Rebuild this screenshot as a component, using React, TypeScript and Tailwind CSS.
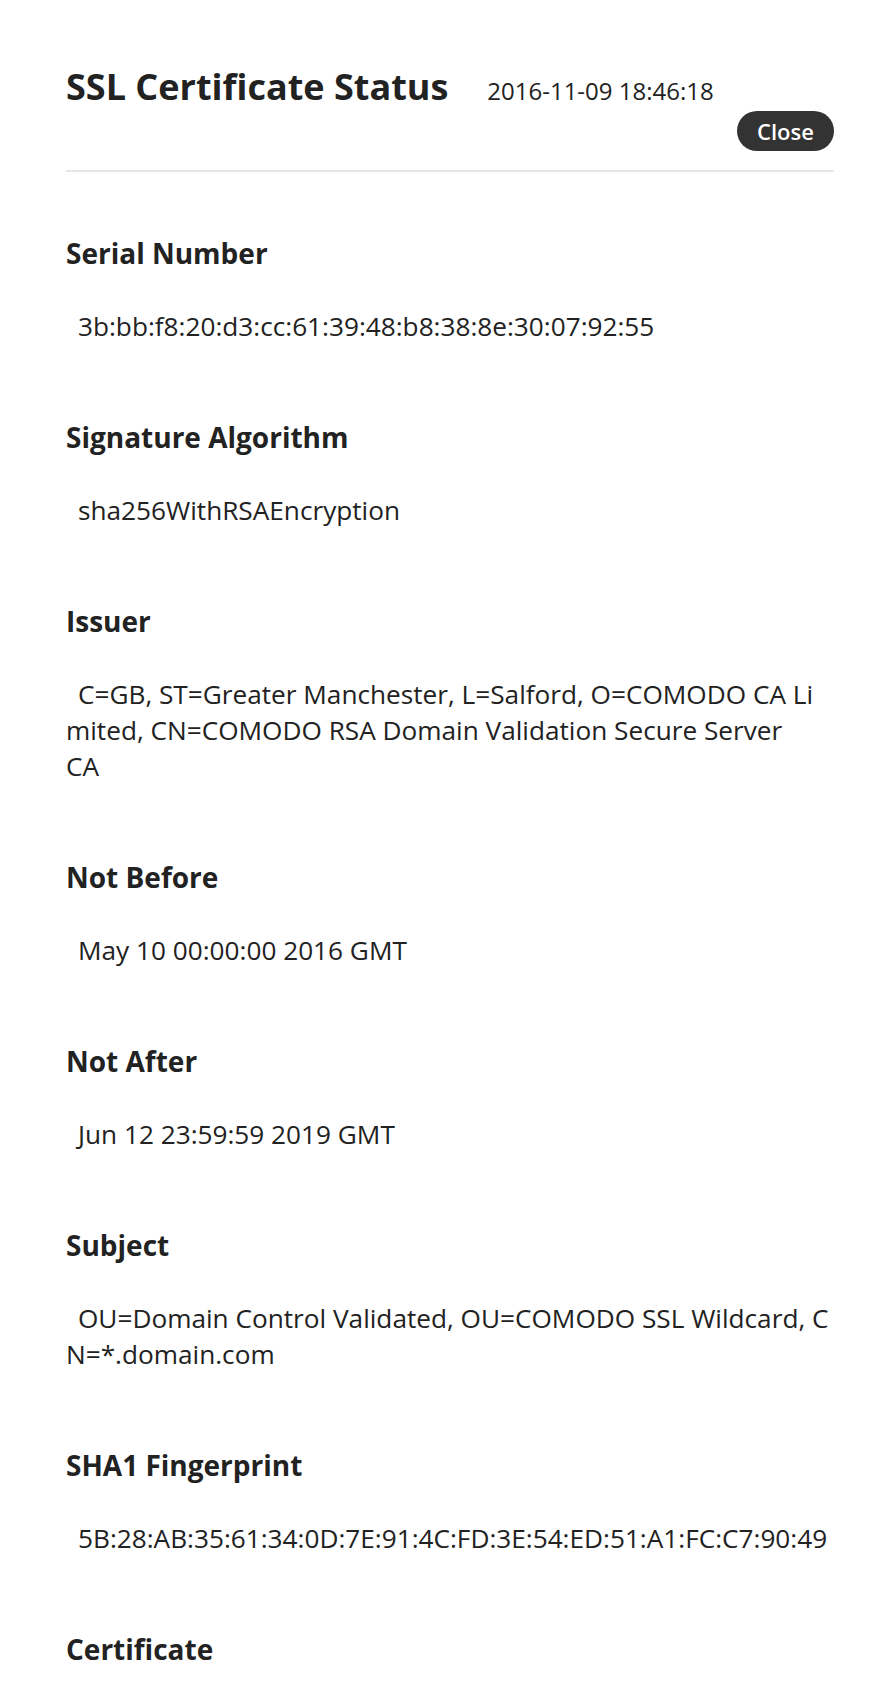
import React from 'react';

type Field = { label: string; lines: string[] };

// lines are split where the original certificate panel wraps them
const FIELDS: Field[] = [
  { label: 'Serial Number', lines: ['3b:bb:f8:20:d3:cc:61:39:48:b8:38:8e:30:07:92:55'] },
  { label: 'Signature Algorithm', lines: ['sha256WithRSAEncryption'] },
  {
    label: 'Issuer',
    lines: [
      'C=GB, ST=Greater Manchester, L=Salford, O=COMODO CA Li',
      'mited, CN=COMODO RSA Domain Validation Secure Server',
      'CA',
    ],
  },
  { label: 'Not Before', lines: ['May 10 00:00:00 2016 GMT'] },
  { label: 'Not After', lines: ['Jun 12 23:59:59 2019 GMT'] },
  { label: 'Subject', lines: ['OU=Domain Control Validated, OU=COMODO SSL Wildcard, C', 'N=*.domain.com'] },
  { label: 'SHA1 Fingerprint', lines: ['5B:28:AB:35:61:34:0D:7E:91:4C:FD:3E:54:ED:51:A1:FC:C7:90:49'] },
  { label: 'Certificate', lines: [] },
];

const App: React.FC = () => {
  return (
    <div className="min-h-[1700px] bg-white font-['Open_Sans',sans-serif] text-[#222]">
      <div className="w-[834px] pl-[66px] pt-[67px]">
        <div className="flex items-baseline">
          <h1 className="text-[36px] leading-[40px] font-bold text-[#222]">SSL Certificate Status</h1>
          <span className="ml-[39px] text-[24px] leading-[40px] text-[#222]">2016-11-09 18:46:18</span>
        </div>
        <div className="flex justify-end">
          <button className="h-[40px] w-[97px] rounded-full bg-[#333] text-[22px] font-semibold text-white">
            Close
          </button>
        </div>
        <div className="mt-[19px] h-[2px] bg-[#e6e6e6]" />

        <div className="pt-[63px]">
          {FIELDS.map((f) => (
            <section key={f.label} className="mb-[75px]">
              <h3 className="text-[28px] leading-[36px] font-bold text-[#222]">{f.label}</h3>
              {f.lines.length > 0 && (
                <p className="mt-[37px] text-[26.2px] leading-[36px] text-[#222]">
                  {f.lines.map((line, i) => (
                    <span key={i} className={`block whitespace-nowrap ${i === 0 ? 'pl-[12px]' : ''}`}>
                      {line}
                    </span>
                  ))}
                </p>
              )}
            </section>
          ))}
        </div>
      </div>
    </div>
  );
};

export default App;
